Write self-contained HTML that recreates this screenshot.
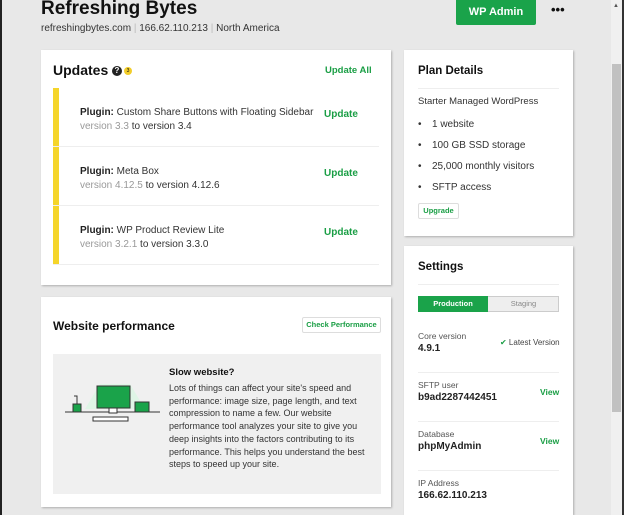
<!DOCTYPE html>
<html style="overflow:hidden"><head><meta charset="utf-8"><style>
*{box-sizing:border-box;margin:0;padding:0}
html,body{width:624px;height:515px;overflow:hidden}
body{background:#e8e8e8;font-family:"Liberation Sans",sans-serif;position:relative;color:#111}
.abs{position:absolute}
.card{position:absolute;background:#fff;box-shadow:1px 1px 2px rgba(0,0,0,.25)}
.g{color:#1a9e45;font-weight:bold}
.h{font-weight:bold;font-size:13px}
.row{position:absolute;left:12px;right:12px;border-bottom:1px solid #eee;height:59px}
.row .t{position:absolute;left:27px;top:18px;font-size:10px;color:#333;line-height:14px}
.row .t b{color:#222}
.row .u{position:absolute;left:271px;top:21px;font-size:10px}
.gr{color:#999}
.li{font-size:10px;color:#333;position:absolute;left:14px}
.li:before{content:"•";position:absolute;left:0}
.li span{margin-left:14px}
.lbl{font-size:8.5px;color:#555;position:absolute;left:14px}
.val{font-size:10px;font-weight:bold;position:absolute;left:14px;color:#222}
.sep{position:absolute;left:14px;right:14px;height:1px;background:#eee}
</style></head><body>
<div class="abs" style="left:0;top:0;width:2px;height:515px;background:#222"></div>
<div class="abs" style="left:41px;top:-2px;font-size:19px;font-weight:bold;color:#111">Refreshing Bytes</div>
<div class="abs" style="left:41px;top:23px;font-size:10px;color:#333">refreshingbytes.com <span style="color:#bbb">|</span> 166.62.110.213 <span style="color:#bbb">|</span> North America</div>
<div class="abs" style="left:456px;top:0;width:80px;height:25px;background:#1aa34a;color:#fff;font-weight:bold;font-size:11px;text-align:center;line-height:24px;border-radius:0 0 2px 2px">WP Admin</div>
<div class="abs" style="left:551px;top:2px;font-size:13px;font-weight:bold">•••</div>

<div class="card" style="left:41px;top:50px;width:350px;height:235px">
  <div class="abs" style="left:12px;top:12px;font-size:14px;font-weight:bold">Updates</div>
  <div class="abs" style="left:71px;top:16px;width:10px;height:10px;border-radius:50%;background:#222;color:#fff;font-size:8px;font-weight:bold;text-align:center;line-height:10px">?</div>
  <div class="abs" style="left:83px;top:17px;width:8px;height:8px;border-radius:50%;background:#f2cd2a;font-size:5px;text-align:center;line-height:8px">3</div>
  <div class="abs g" style="left:284px;top:15px;font-size:9.5px">Update All</div>
  <div class="abs" style="left:12px;top:38px;width:6px;height:177px;background:#f5d52a"></div>
  <div class="row" style="top:38px"><div class="t"><b>Plugin:</b> Custom Share Buttons with Floating Sidebar<br><span class="gr">version 3.3</span> to version 3.4</div><div class="u g">Update</div></div>
  <div class="row" style="top:97px"><div class="t"><b>Plugin:</b> Meta Box<br><span class="gr">version 4.12.5</span> to version 4.12.6</div><div class="u g">Update</div></div>
  <div class="row" style="top:156px"><div class="t"><b>Plugin:</b> WP Product Review Lite<br><span class="gr">version 3.2.1</span> to version 3.3.0</div><div class="u g">Update</div></div>
</div>

<div class="card" style="left:41px;top:297px;width:350px;height:210px">
  <div class="abs h" style="left:12px;top:22px;font-size:12px">Website performance</div>
  <div class="abs g" style="left:261px;top:20px;width:79px;height:16px;border:1px solid #ddd;border-radius:2px;font-size:7.5px;text-align:center;line-height:14px">Check Performance</div>
  <div class="abs" style="left:12px;top:57px;width:328px;height:140px;background:#f0f0f0">
    <svg class="abs" style="left:12px;top:20px" width="95" height="60" viewBox="0 0 95 60">
      <polygon points="35,10 65,10 80,35 20,35" fill="#dff5e6"/>
      <line x1="0" y1="38" x2="95" y2="38" stroke="#333" stroke-width="1"/>
      <rect x="32" y="12" width="33" height="22" fill="#1aa34a" stroke="#333"/>
      <rect x="44" y="34" width="8" height="5" fill="#fff" stroke="#333"/>
      <rect x="28" y="43" width="35" height="4" fill="#fff" stroke="#333"/>
      <rect x="8" y="30" width="8" height="8" fill="#1aa34a" stroke="#333"/>
      <path d="M12 30 V22 h-3" stroke="#333" fill="none"/>
      <rect x="70" y="28" width="14" height="10" fill="#1aa34a" stroke="#333"/>
    </svg>
    <div class="abs" style="left:116px;top:13px;font-size:9.5px;font-weight:bold">Slow website?</div>
    <div class="abs" style="left:116px;top:28px;width:205px;font-size:9px;line-height:12.7px;color:#333">Lots of things can affect your site's speed and performance: image size, page length, and text compression to name a few. Our website performance tool analyzes your site to give you deep insights into the factors contributing to its performance. This helps you understand the best steps to speed up your site.</div>
  </div>
</div>

<div class="card" style="left:404px;top:50px;width:169px;height:186px">
  <div class="abs h" style="left:14px;top:15px;font-size:11.5px">Plan Details</div>
  <div class="sep" style="top:38px"></div>
  <div class="abs" style="left:14px;top:46px;font-size:9.5px;color:#333">Starter Managed WordPress</div>
  <div class="li" style="top:69px"><span>1 website</span></div>
  <div class="li" style="top:90px"><span>100 GB SSD storage</span></div>
  <div class="li" style="top:111px"><span>25,000 monthly visitors</span></div>
  <div class="li" style="top:132px"><span>SFTP access</span></div>
  <div class="abs g" style="left:14px;top:153px;width:41px;height:16px;border:1px solid #ddd;border-radius:2px;font-size:7.5px;text-align:center;line-height:14px">Upgrade</div>
</div>

<div class="card" style="left:404px;top:246px;width:169px;height:269px">
  <div class="abs h" style="left:14px;top:15px;font-size:11.5px">Settings</div>
  <div class="sep" style="top:38px"></div>
  <div class="abs" style="left:14px;top:50px;width:141px;height:16px;border:1px solid #ccc;background:#eee"></div>
  <div class="abs" style="left:14px;top:50px;width:70px;height:16px;background:#1aa34a;color:#fff;font-size:7.5px;font-weight:bold;text-align:center;line-height:16px">Production</div>
  <div class="abs" style="left:84px;top:50px;width:71px;height:16px;color:#888;font-size:7.5px;text-align:center;line-height:16px">Staging</div>
  <div class="lbl" style="top:85px">Core version</div>
  <div class="val" style="top:97px">4.9.1</div>
  <div class="abs" style="left:96px;top:92px;font-size:8px;color:#444"><span style="color:#1a9e45">✔</span> Latest Version</div>
  <div class="sep" style="top:126px"></div>
  <div class="lbl" style="top:134px">SFTP user</div>
  <div class="val" style="top:146px">b9ad2287442451</div>
  <div class="abs g" style="left:136px;top:141px;font-size:8.5px">View</div>
  <div class="sep" style="top:175px"></div>
  <div class="lbl" style="top:183px">Database</div>
  <div class="val" style="top:195px">phpMyAdmin</div>
  <div class="abs g" style="left:136px;top:190px;font-size:8.5px">View</div>
  <div class="sep" style="top:224px"></div>
  <div class="lbl" style="top:232px">IP Address</div>
  <div class="val" style="top:244px">166.62.110.213</div>
</div>

<div class="abs" style="left:611px;top:0;width:11px;height:515px;background:#f0f0f0"></div>
<div class="abs" style="left:612px;top:64px;width:9px;height:348px;background:#c1c1c1"></div>
<div class="abs" style="left:613px;top:3px;font-size:6px;color:#555">▲</div>
<div class="abs" style="left:622px;top:0;width:2px;height:515px;background:#333"></div>
</body></html>
